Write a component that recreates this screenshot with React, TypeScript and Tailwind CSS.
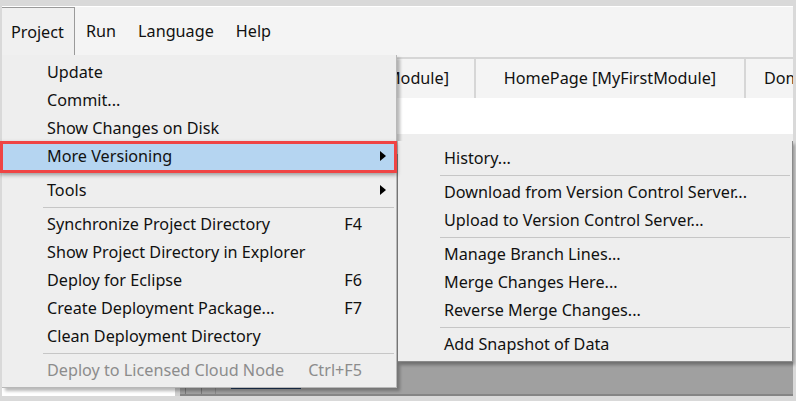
import React from "react";

const Arrow = () => (
  <svg width="6" height="10" viewBox="0 0 6 10" className="block">
    <path d="M0 0L6 5L0 10Z" fill="#000" />
  </svg>
);

type It = {
  label?: string;
  shortcut?: string;
  arrow?: boolean;
  disabled?: boolean;
  highlighted?: boolean;
  sep?: boolean;
  hiddenSep?: boolean;
};

const projectItems: It[] = [
  { label: "Update" },
  { label: "Commit..." },
  { label: "Show Changes on Disk" },
  { label: "More Versioning", arrow: true, highlighted: true },
  { hiddenSep: true },
  { label: "Tools", arrow: true },
  { sep: true },
  { label: "Synchronize Project Directory", shortcut: "F4" },
  { label: "Show Project Directory in Explorer" },
  { label: "Deploy for Eclipse", shortcut: "F6" },
  { label: "Create Deployment Package...", shortcut: "F7" },
  { label: "Clean Deployment Directory" },
  { sep: true },
  { label: "Deploy to Licensed Cloud Node", shortcut: "Ctrl+F5", disabled: true },
];

const subItems: It[] = [
  { label: "History..." },
  { sep: true },
  { label: "Download from Version Control Server..." },
  { label: "Upload to Version Control Server..." },
  { sep: true },
  { label: "Manage Branch Lines..." },
  { label: "Merge Changes Here..." },
  { label: "Reverse Merge Changes..." },
  { sep: true },
  { label: "Add Snapshot of Data" },
];

function ProjectMenu() {
  return (
    <div className="absolute left-[2px] top-[55px] w-[395px] bg-[#eeeeee] border-r border-b border-[#b8b8b8] shadow-[3px_3px_3px_rgba(0,0,0,0.28)] py-[3px]">
      {projectItems.map((it, i) => {
        if (it.sep)
          return (
            <div key={i} className="h-[6px] flex items-center pl-[41px] pr-[2px]">
              <div className="h-px w-full bg-[#c6c6c6]" />
            </div>
          );
        if (it.hiddenSep) return <div key={i} className="h-[6px]" />;
        return (
          <div
            key={i}
            className={
              "h-[28px] flex items-center pl-[45px] " +
              (it.highlighted ? "bg-[#b5d5f1] mr-[2px]" : "")
            }
          >
            <span className={"flex-1 " + (it.disabled ? "text-[#8c8c8c]" : "text-[#111]")}>
              {it.label}
            </span>
            <span className={"text-right " + (it.disabled ? "text-[#8c8c8c]" : "text-[#111]")}>
              {it.shortcut}
            </span>
            <span className={"flex justify-end " + (it.highlighted ? "w-[32px] pr-[8px]" : "w-[34px] pr-[10px]")}>
              {it.arrow ? <Arrow /> : null}
            </span>
          </div>
        );
      })}
    </div>
  );
}

function SubMenu() {
  return (
    <div className="absolute left-[398px] top-[141px] w-[395px] bg-[#eeeeee] border-r border-b border-[#8a8a8a] shadow-[2px_3px_3px_rgba(0,0,0,0.3)] py-[3px]">
      {subItems.map((it, i) => {
        if (it.sep)
          return (
            <div key={i} className="h-[6px] flex items-center pl-[42px] pr-[2px]">
              <div className="h-px w-full bg-[#c6c6c6]" />
            </div>
          );
        return (
          <div key={i} className="h-[28px] flex items-center pl-[46px] text-[#111]">
            {it.label}
          </div>
        );
      })}
    </div>
  );
}

export default function App() {
  return (
    <div className="relative w-[796px] h-[401px] overflow-hidden bg-[#d9d9d9] pt-[6px] pl-[2px] pr-[3px] pb-[5px] font-['Segoe_UI','Noto_Sans',sans-serif] text-[16.2px] leading-none">
      <div className="flex flex-col h-full bg-white">
        {/* Menu bar */}
        <div className="h-[50px] shrink-0 flex items-stretch bg-[#f4f4f4] border-t border-white text-[#111]">
          <div className="flex items-center px-[9px] bg-[#f0f0f0] border-t border-r border-[#9a9a9a] w-[73px] shrink-0">
            Project
          </div>
          <div className="flex items-center px-[11px]">Run</div>
          <div className="flex items-center px-[11px]">Language</div>
          <div className="flex items-center px-[11px]">Help</div>
        </div>
        {/* Main */}
        <div className="flex-1 flex min-h-0">
          <div className="w-[173px] shrink-0 bg-white" />
          <div className="w-[5px] shrink-0 bg-[#cfcfcf]" />
          <div className="flex-1 min-w-0 flex flex-col bg-[#f4f4f4]">
            <div className="h-px shrink-0" />
            <div className="h-[41px] shrink-0 flex border-t-2 border-[#d6d6d6] text-[#111] overflow-hidden">
              <div className="w-[296px] shrink-0 flex items-center justify-end pr-[25px] border-r-2 border-[#d6d6d6] whitespace-nowrap overflow-hidden">
                Domain Model [MyFirstModule]
              </div>
              <div className="w-[270px] shrink-0 flex items-center justify-center border-r-2 border-[#d6d6d6] whitespace-nowrap">
                HomePage [MyFirstModule]
              </div>
              <div className="w-[200px] shrink-0 flex items-center pl-[18px] whitespace-nowrap">
                Domain Model
              </div>
            </div>
            <div className="h-[36px] shrink-0 bg-white" />
            <div className="h-[20px] shrink-0 bg-[#eeeeee] flex items-center">
              <div className="ml-[220px] w-[20px] h-px bg-[#9a9a9a]" />
              <div className="ml-[90px] w-[17px] h-px bg-[#9a9a9a]" />
              <div className="ml-[122px] w-[16px] h-px bg-[#9a9a9a]" />
            </div>
            <div className="flex-1 flex bg-[#a0a0a0] border-b-2 border-[#858585]">
              <div className="ml-[5px] w-px bg-[#7a7a7a]" />
              <div className="ml-[15px] w-px bg-[#7a7a7a]" />
              <div className="ml-[13px] flex-1 flex flex-col justify-end border-l border-[#8a8a8a]">
                <div className="ml-[15px] mb-[5px] w-[70px] h-[4px] rounded-t-[3px] bg-[#1d3557]" />
              </div>
            </div>
          </div>
        </div>
      </div>

      <ProjectMenu />
      <SubMenu />

      {/* Red annotation box */}
      <div className="absolute left-0 top-[141px] w-[397px] h-[32px] border-[3px] border-[#ef4444] shadow-[0_2px_4px_rgba(0,0,0,0.35)]" />
    </div>
  );
}
